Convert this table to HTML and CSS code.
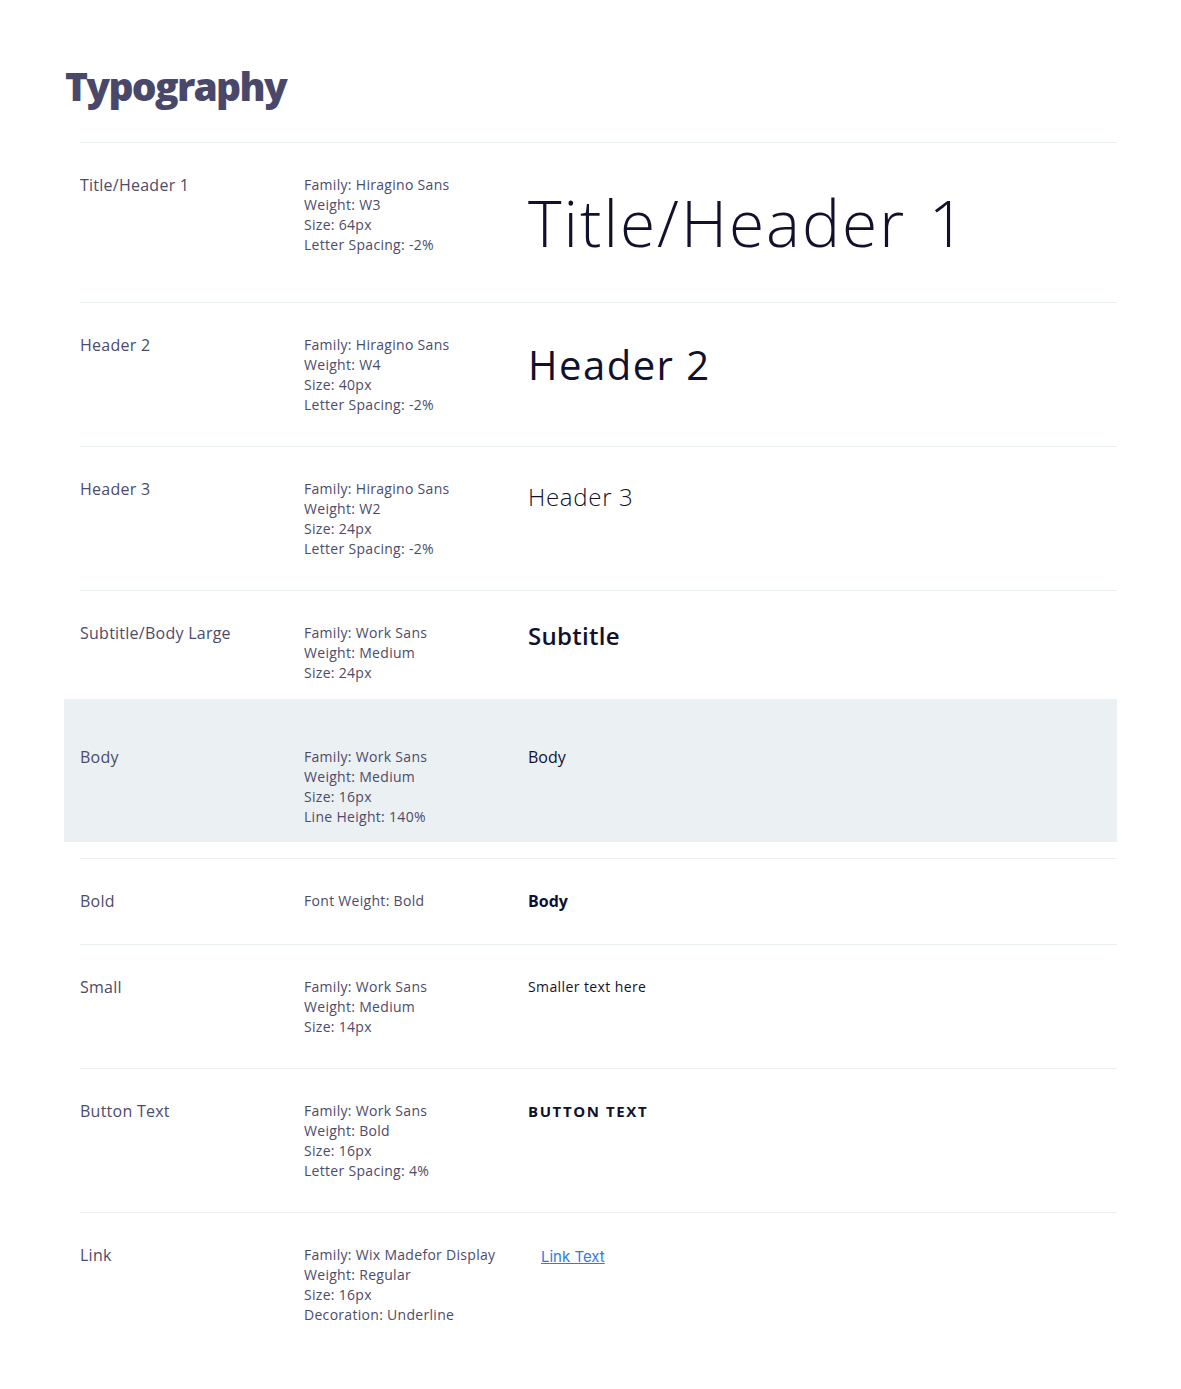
FILE: index.html
```html
<!DOCTYPE html>
<html lang="en">
<head>
<meta charset="utf-8">
<title>Typography</title>
<link rel="stylesheet" href="styles.css">
</head>
<body>
<main class="page">
  <h1 class="page-title">Typography</h1>
  <div class="table">
    <div class="row">
      <div class="label">Title/Header 1</div>
      <div class="specs"><div>Family: Hiragino Sans</div><div>Weight: W3</div><div>Size: 64px</div><div>Letter Spacing: -2%</div></div>
      <div class="sample"><span class="s-h1">Title/Header 1</span></div>
    </div>
    <div class="row">
      <div class="label">Header 2</div>
      <div class="specs"><div>Family: Hiragino Sans</div><div>Weight: W4</div><div>Size: 40px</div><div>Letter Spacing: -2%</div></div>
      <div class="sample"><span class="s-h2">Header 2</span></div>
    </div>
    <div class="row">
      <div class="label">Header 3</div>
      <div class="specs"><div>Family: Hiragino Sans</div><div>Weight: W2</div><div>Size: 24px</div><div>Letter Spacing: -2%</div></div>
      <div class="sample"><span class="s-h3">Header 3</span></div>
    </div>
    <div class="row">
      <div class="label">Subtitle/Body Large</div>
      <div class="specs"><div>Family: Work Sans</div><div>Weight: Medium</div><div>Size: 24px</div></div>
      <div class="sample"><span class="s-subtitle">Subtitle</span></div>
    </div>
    <div class="row row-active">
      <div class="label">Body</div>
      <div class="specs"><div>Family: Work Sans</div><div>Weight: Medium</div><div>Size: 16px</div><div>Line Height: 140%</div></div>
      <div class="sample"><span class="s-body">Body</span></div>
    </div>
    <div class="row">
      <div class="label">Bold</div>
      <div class="specs"><div>Font Weight: Bold</div></div>
      <div class="sample"><span class="s-bold">Body</span></div>
    </div>
    <div class="row">
      <div class="label">Small</div>
      <div class="specs"><div>Family: Work Sans</div><div>Weight: Medium</div><div>Size: 14px</div></div>
      <div class="sample"><span class="s-small">Smaller text here</span></div>
    </div>
    <div class="row">
      <div class="label">Button Text</div>
      <div class="specs"><div>Family: Work Sans</div><div>Weight: Bold</div><div>Size: 16px</div><div>Letter Spacing: 4%</div></div>
      <div class="sample"><span class="s-button">BUTTON TEXT</span></div>
    </div>
    <div class="row row-last">
      <div class="label">Link</div>
      <div class="specs"><div>Family: Wix Madefor Display</div><div>Weight: Regular</div><div>Size: 16px</div><div>Decoration: Underline</div></div>
      <div class="sample"><a class="s-link" href="#">Link Text</a></div>
    </div>
  </div>
</main>
</body>
</html>
```

FILE: styles.css
```css
* { box-sizing: border-box; }
html, body { margin: 0; padding: 0; background: #ffffff; }
body {
  font-family: "Open Sans", "Liberation Sans", sans-serif;
  color: #4c4b6a;
}
.page {
  padding: 62px 64px 32px 64px;
}
.page-title {
  margin: 0 0 32px 1px;
  font-family: "Open Sans", sans-serif;
  font-weight: 800;
  font-size: 39px;
  line-height: 48px;
  letter-spacing: -1.7px;
  color: #4a4869;
}
.table {
  margin-left: 16px;
  border-top: 1px solid #e9eef1;
}
.row {
  position: relative;
  display: grid;
  grid-template-columns: 224px 224px 1fr;
  align-items: start;
  padding: 32px 0 31px 0;
  border-bottom: 1px solid #e9eef1;
}
.row-last { border-bottom: none; }
.row-active::before {
  content: "";
  position: absolute;
  top: -16px;
  left: -16px;
  width: calc(100% + 16px);
  height: 100%;
  background: #ebf0f3;
  z-index: 0;
}
.row > * { position: relative; z-index: 1; }
.label {
  font-size: 16px;
  line-height: 20px;
  letter-spacing: 0.25px;
  color: #4c4b6a;
}
.specs {
  font-size: 14px;
  line-height: 20px;
  letter-spacing: 0.3px;
  color: #4c4b6a;
}
.sample { color: #11112d; }
.s-h1 {
  display: block;
  font-family: "Open Sans", "Noto Sans", sans-serif;
  font-weight: 300;
  font-size: 64px;
  line-height: 96px;
  letter-spacing: 2px;
  word-spacing: 4px;
}
.s-h2 {
  display: block;
  font-family: "Open Sans", "Noto Sans", sans-serif;
  font-weight: 400;
  font-size: 40px;
  line-height: 60px;
  letter-spacing: 1.5px;
}
.s-h3 {
  display: block;
  font-family: "Open Sans", "Noto Sans", sans-serif;
  font-weight: 300;
  font-size: 24px;
  line-height: 36px;
  letter-spacing: 0.7px;
}
.s-subtitle {
  display: block;
  font-size: 24px;
  font-weight: 600;
  line-height: 26px;
  letter-spacing: 0.3px;
}
.s-body {
  display: block;
  font-size: 16px;
  font-weight: 500;
  line-height: 21px;
  margin-bottom: 1.4px;
}
.s-bold {
  display: block;
  font-size: 16px;
  font-weight: 700;
  line-height: 21px;
  margin-bottom: 1.4px;
}
.s-small {
  display: block;
  font-size: 14px;
  font-weight: 500;
  line-height: 20px;
  letter-spacing: 0.4px;
}
.s-button {
  display: block;
  font-size: 15px;
  font-weight: 700;
  line-height: 20px;
  letter-spacing: 1.6px;
}
.s-link {
  display: inline-block;
  margin-left: 13px;
  font-family: "Inter", "Noto Sans", sans-serif;
  font-size: 15px;
  font-weight: 400;
  line-height: 19px;
  color: #2f7ae5;
  text-decoration: underline;
}
```
